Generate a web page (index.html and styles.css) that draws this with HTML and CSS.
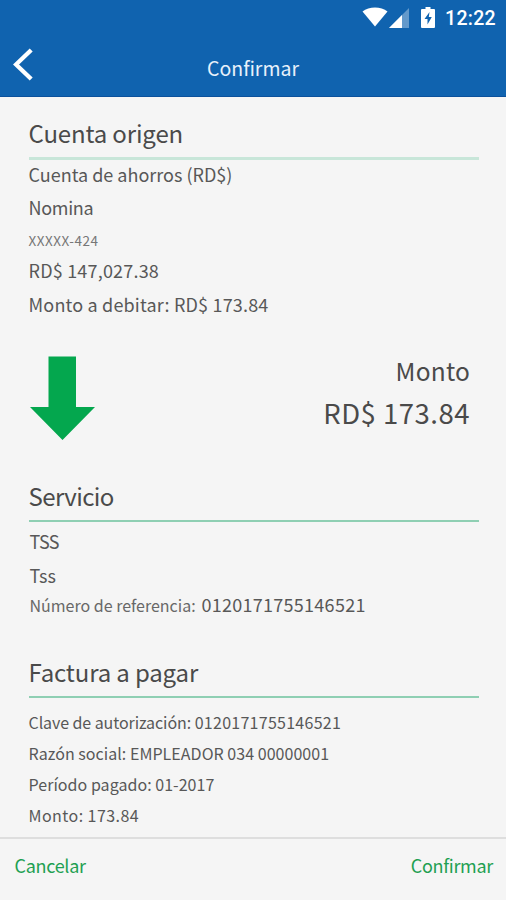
FILE: index.html
```html
<!DOCTYPE html>
<html lang="es">
<head>
    <meta charset="UTF-8">
    <meta name="viewport" content="width=device-width, initial-scale=1">
    <title>Confirmar</title>
    <link rel="stylesheet" href="styles.css">
</head>
<body>
    <header class="header">
        <div class="status-bar">
            <svg class="wifi" width="26" height="20" viewBox="0 0 26 20"><path d="M0.5 4.500C7-1 19-1 25.500 4.500L13 19.500z" fill="#fff"/></svg>
            <svg class="signal" width="20" height="20" viewBox="0 0 20 20"><path d="M20 0v20H0z" fill="#fff" opacity=".35"/><path d="M13 7v13H0z" fill="#fff"/></svg>
            <svg class="battery" width="14" height="21" viewBox="0 0 14 21"><path d="M4.500 0h5v2H13q1 0 1 1v17q0 1-1 1H1q-1 0-1-1V3q0-1 1-1h3.500z" fill="#fff"/><path d="M8.500 5L3.500 12h3v5.500L10.800 10H7.800z" fill="#1063af"/></svg>
            <span class="time">12:22</span>
        </div>
        <div class="nav">
            <svg class="back" width="20" height="33" viewBox="0 0 20 33"><path d="M18.200 2L3 16.500L18.200 31" fill="none" stroke="#fff" stroke-width="4.300"/></svg>
            <h1 class="nav-title">Confirmar</h1>
        </div>
    </header>

    <main class="content">
        <!-- Cuenta origen -->
        <section class="account">
            <h2 class="title title-thick">Cuenta origen</h2>
            <p class="line type">Cuenta de ahorros (RD$)</p>
            <p class="line name">Nomina</p>
            <p class="line number">XXXXX-424</p>
            <p class="line balance">RD$ 147,027.38</p>
            <p class="line debit">Monto a debitar: RD$ 173.84</p>
        </section>

        <!-- Monto -->
        <section class="amount">
            <svg width="65" height="84" viewBox="0 0 65 84"><path d="M18.500 0.500H46V51H65L32.500 84L0 51H18.500z" fill="#04a74e"/></svg>
            <div class="amount-text">
                <p class="amount-label">Monto</p>
                <p class="amount-value">RD$ 173.84</p>
            </div>
        </section>

        <!-- Servicio -->
        <section class="service">
            <h2 class="title">Servicio</h2>
            <p class="line tss">TSS</p>
            <p class="line tss-name">Tss</p>
            <p class="line reference"><span class="ref-label">Número de referencia:</span><span class="ref-value">0120171755146521</span></p>
        </section>

        <!-- Factura -->
        <section class="invoice">
            <h2 class="title">Factura a pagar</h2>
            <p class="detail"><span class="key">Clave de autorización:</span> <span class="code">0120171755146521</span></p>
            <p class="detail">Razón social: EMPLEADOR 034 00000001</p>
            <p class="detail">Período pagado: 01-2017</p>
            <p class="detail total">Monto: 173.84</p>
        </section>
    </main>

    <footer class="footer">
        <a class="action">Cancelar</a>
        <a class="action">Confirmar</a>
    </footer>
</body>
</html>
```
FILE: styles.css
```css
* {
    box-sizing: border-box;
}

body {
    margin: 0;
    height: 900px;
    display: flex;
    flex-direction: column;
    background: #f5f5f5;
    color: #585858;
    font-family: "Noto Sans CJK JP", "Open Sans", sans-serif;
    overflow: hidden;
}

h1, h2, p {
    margin: 0;
    font-weight: normal;
    white-space: nowrap;
}

svg {
    display: block;
    flex-shrink: 0;
}

.header {
    height: 97px;
    background: #1063af;
    border-bottom: 1px solid #0b519c;
    color: #fff;
}

.status-bar {
    display: flex;
    justify-content: flex-end;
    height: 37px;
    padding: 7px 10px 0 0;
}

.signal {
    margin: 1px 12px 0 1px;
}

.time {
    margin-left: 10px;
    font: 500 19.5px/23px Roboto, sans-serif;
    letter-spacing: 0.3px;
}

.nav {
    display: grid;
    grid-template-columns: 60px 1fr 60px;
    height: 59px;
}

.back {
    margin: 11px 0 0 13px;
}

.nav-title {
    padding-top: 15px;
    font-size: 19.5px;
    line-height: 32px;
    text-align: center;
    color: #e8f1fb;
}

.content {
    flex: 1;
    padding: 20px 27px 0 28.5px;
}

.title {
    height: 42px;
    border-bottom: 2px solid #8fcfb3;
    font-size: 24px;
    line-height: 32px;
    letter-spacing: -0.15px;
    color: #4a4a4a;
}

.title-thick {
    height: 43px;
    border-bottom: 3px solid #c8e6d9;
}

.line {
    font-size: 18px;
    line-height: 26px;
}

.type {
    line-height: 29px;
}

.name {
    line-height: 36px;
    letter-spacing: -0.3px;
}

.number {
    margin-top: -1px;
    font-size: 13.5px;
    line-height: 33px;
    letter-spacing: 0.5px;
    color: #777;
}

.balance {
    letter-spacing: 0.2px;
}

.debit {
    margin-top: 1px;
    line-height: 41px;
    letter-spacing: 0.18px;
}

.amount {
    display: flex;
    justify-content: space-between;
    height: 124px;
    margin-top: 31px;
    padding-left: 1.5px;
    color: #4a4a4a;
}

.amount-text {
    margin-top: -1px;
    padding-right: 9px;
    text-align: right;
}

.amount-label {
    margin-bottom: 5px;
    font-size: 24.5px;
    line-height: 32px;
    letter-spacing: 0.2px;
}

.amount-value {
    font-size: 27.5px;
    line-height: 40px;
    letter-spacing: 0.5px;
}

.service {
    height: 176px;
}

.service .title {
    letter-spacing: -0.6px;
}

.service .line {
    padding-left: 1px;
}

.tss {
    margin-top: 6px;
    letter-spacing: -0.6px;
}

.tss-name {
    margin-top: 8px;
}

.reference {
    display: flex;
    align-items: baseline;
    margin-top: 3px;
}

.ref-label {
    width: 172px;
    font-size: 16px;
    color: #686868;
}

.ref-value {
    letter-spacing: 0.27px;
}

.invoice .title {
    margin-bottom: 9px;
}

.detail {
    font-size: 16px;
    line-height: 31px;
    letter-spacing: 0.04px;
}

.key {
    letter-spacing: -0.08px;
}

.code {
    letter-spacing: 0.27px;
}

.total {
    letter-spacing: 0.45px;
}

.footer {
    display: flex;
    justify-content: space-between;
    height: 63px;
    padding: 13px 13px 0 14.5px;
    border-top: 2px solid #dedede;
}

.action {
    font-size: 18px;
    line-height: 26px;
    letter-spacing: -0.3px;
    color: #1fa052;
}
```
